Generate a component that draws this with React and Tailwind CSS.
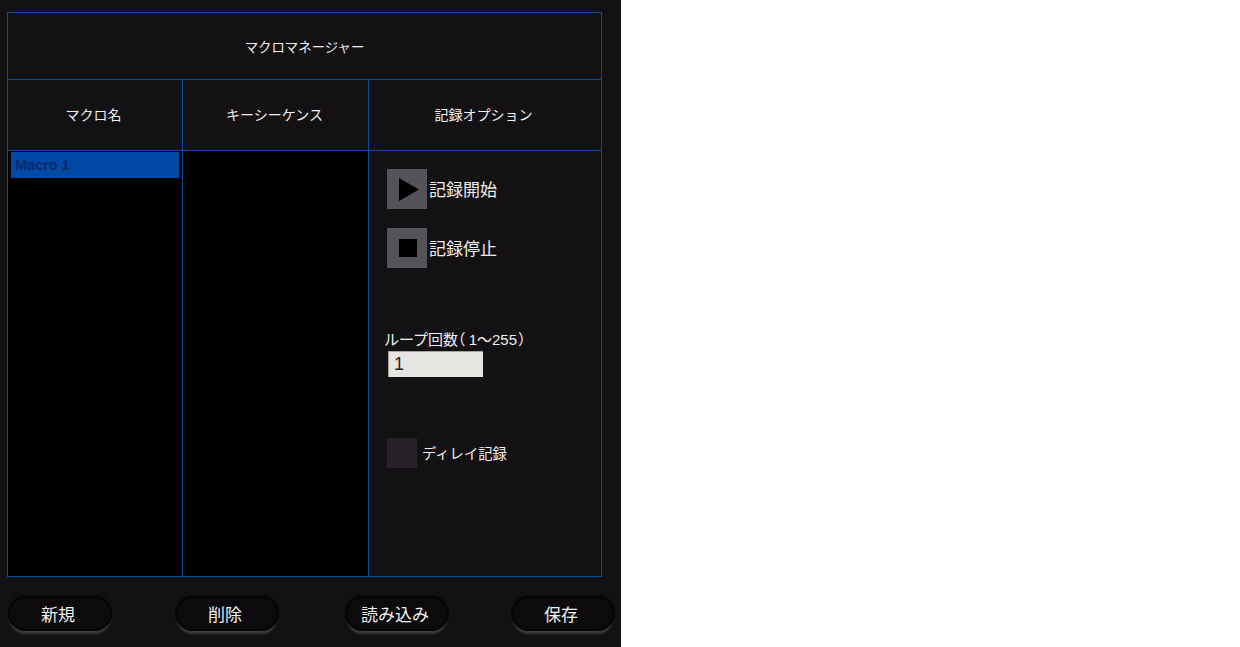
import React from "react";

const jp = "font-['Noto_Sans_CJK_JP','Liberation_Sans',sans-serif]";

const PillButton = ({ label, className }) => (
  <button
    className={`w-[100px] h-[31px] pr-1 flex items-center justify-center rounded-[16px] bg-[#0c0a0d] text-[17px] text-[#f0f0f0] shadow-[0_0_0_2px_#060506,0_5px_2px_#3c3a3e,0_-3px_3px_#0c0a0d] ${className}`}
  >
    {label}
  </button>
);

const App = () => {
  return (
    <div className="h-[647px] w-[1240px] bg-white">
      <div className={`h-[647px] w-[621px] bg-[#141115] pl-[7px] pt-3 text-[#eeeeee] ${jp}`}>
        {/* Table */}
        <div className="w-[595px] h-[565px] flex flex-col border border-[#0c4c9c]">
          <div className="h-[67px] flex items-center justify-center border-b border-[#0c4c9c] text-[13.4px]">
            マクロマネージャー
          </div>

          <div className="h-[71px] flex border-b border-[#0c4c9c] text-[14px] pb-[2px]">
            <div className="w-[175px] -mb-[2px] pb-[2px] pr-[3px] flex items-center justify-center border-r border-[#0c4c9c]">マクロ名</div>
            <div className="w-[186px] -mb-[2px] pb-[2px] pr-[2px] flex items-center justify-center border-r border-[#0c4c9c]">キーシーケンス</div>
            <div className="flex-1 pr-[3px] flex items-center justify-center">記録オプション</div>
          </div>

          <div className="flex-1 flex min-h-0">
            {/* Macro list */}
            <div className="w-[175px] bg-black border-r border-[#0c4c9c] pt-[1px] pl-[3px]">
              <div className="w-[168px] h-[26px] pl-1 pt-[2px] flex items-center bg-[#0049a5] text-[#0b2a6e] text-[14.5px] font-bold font-['Liberation_Sans',sans-serif]">
                Macro 1
              </div>
            </div>

            {/* Key sequence */}
            <div className="w-[186px] bg-black border-r border-[#0c4c9c]"></div>

            {/* Record options */}
            <div className="flex-1 flex flex-col pt-[18px]">
              <div className="flex items-center ml-[18px] text-[17px]">
                <button className="w-10 h-10 flex items-center justify-center bg-[#55525a]">
                  <svg className="ml-[3px]" width="20" height="23" viewBox="0 0 20 23">
                    <path d="M0 0 L20 11.5 L0 23 Z" fill="#000000" />
                  </svg>
                </button>
                <span className="ml-[2px]">記録開始</span>
              </div>

              <div className="flex items-center ml-[18px] mt-[19px] text-[17px]">
                <button className="w-10 h-10 flex items-center justify-center bg-[#55525a]">
                  <span className="w-[18px] h-[18px] bg-black ml-[1px]"></span>
                </button>
                <span className="ml-[2px]">記録停止</span>
              </div>

              <div className="mt-[60px] ml-[15px] text-[15px] leading-[22px] whitespace-nowrap">
                ループ回数<span className="[font-feature-settings:'halt']">（</span>
                <span className="ml-[3px] font-['Liberation_Sans','Noto_Sans_CJK_JP',sans-serif]">1〜255</span>
                <span className="ml-[1px] [font-feature-settings:'halt']">）</span>
              </div>
              <div className="ml-[19px] w-[95px] h-[26px] pl-[5px] flex items-center bg-[#e6e5e1] text-[#222222] text-[18px] border-t border-l border-[#a5a5a0] font-['Liberation_Sans',sans-serif]">
                1
              </div>

              <div className="flex items-center ml-[18px] mt-[61px] text-[14.3px]">
                <span className="w-[30px] h-[30px] bg-[#252127]"></span>
                <span className="ml-[5px]">ディレイ記録</span>
              </div>
            </div>
          </div>
        </div>

        {/* Bottom buttons */}
        <div className="flex mt-[21px] ml-[3px]">
          <PillButton label="新規" />
          <PillButton label="削除" className="ml-[67px]" />
          <PillButton label="読み込み" className="ml-[70px]" />
          <PillButton label="保存" className="ml-[66px]" />
        </div>
      </div>
    </div>
  );
};

export default App;
